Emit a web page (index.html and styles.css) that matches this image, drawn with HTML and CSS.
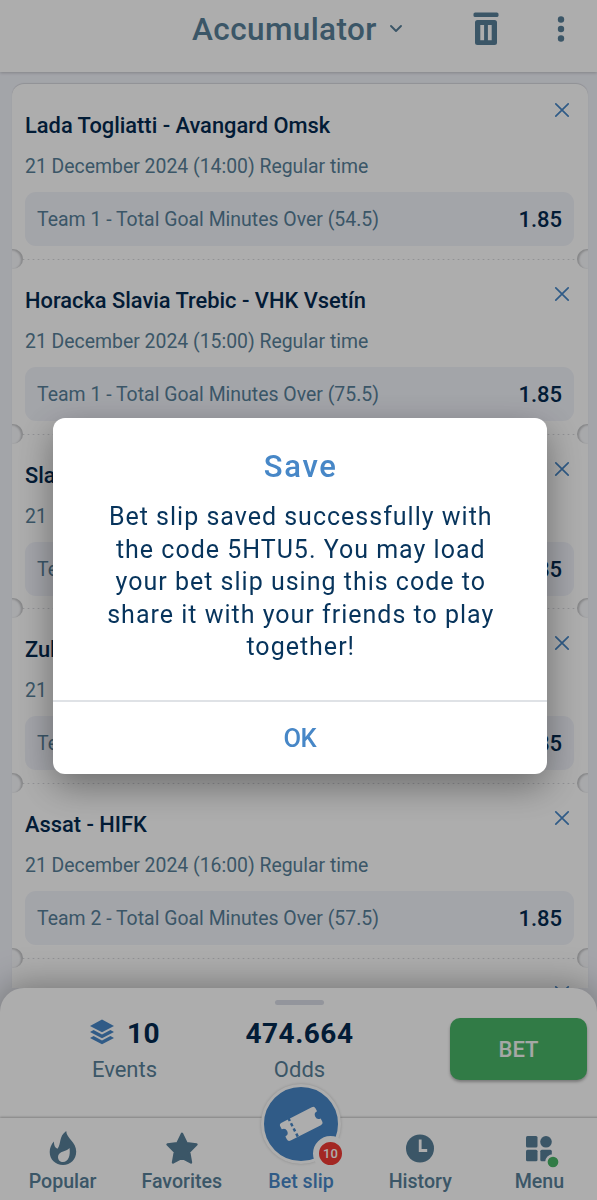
FILE: index.html
```html
<!DOCTYPE html>
<html lang="en">

<head>
    <meta charset="UTF-8">
    <meta name="viewport" content="width=device-width, initial-scale=1.0">
    <title>Bet slip</title>
    <link rel="stylesheet" href="styles.css">
</head>

<body>
    <svg class="sprite">
        <symbol id="close" viewBox="0 0 16 16">
            <path d="M1.8 1.8L14.2 14.2M14.2 1.8L1.8 14.2" fill="none" stroke="currentColor" stroke-width="1.7" stroke-linecap="round"/>
        </symbol>
    </svg>

    <header class="header">
        <h1 class="header-title">Accumulator</h1>
        <svg class="chevron" viewBox="0 0 14 10"><path d="M2 2l5 5 5-5" fill="none" stroke="currentColor" stroke-width="1.9" stroke-linecap="round" stroke-linejoin="round"/></svg>
        <svg class="trash" viewBox="0 0 26 34">
            <rect x="0.5" y="0.5" width="25" height="4.6" rx="1.6"/>
            <path fill-rule="evenodd" d="M4.500 8h17a2.500 2.500 0 0 1 2.500 2.500v20a2.500 2.500 0 0 1-2.500 2.500h-17a2.500 2.500 0 0 1-2.500-2.500v-20a2.500 2.500 0 0 1 2.500-2.500zM7.300 13v15.200h3.800V13zM14.900 13v15.200h3.800V13z"/>
        </svg>
        <svg class="dots" viewBox="0 0 8 26"><circle cx="4" cy="3.500" r="3.200"/><circle cx="4" cy="13" r="3.200"/><circle cx="4" cy="22.500" r="3.200"/></svg>
    </header>

    <main class="list">
        <div class="event first">
            <h2>Lada Togliatti - Avangard Omsk</h2>
            <p class="date">21 December 2024 (14:00) Regular time</p>
            <div class="pick"><span>Team 1 - Total Goal Minutes Over (54.5)</span><b>1.85</b></div>
            <svg class="close"><use href="#close"/></svg>
        </div>
        <div class="event">
            <h2>Horacka Slavia Trebic - VHK Vsetín</h2>
            <p class="date">21 December 2024 (15:00) Regular time</p>
            <div class="pick"><span>Team 1 - Total Goal Minutes Over (75.5)</span><b>1.85</b></div>
            <svg class="close"><use href="#close"/></svg>
        </div>
        <div class="event">
            <h2>Sla</h2>
            <p class="date">21</p>
            <div class="pick"><span>Te</span><b>1.85</b></div>
            <svg class="close"><use href="#close"/></svg>
        </div>
        <div class="event">
            <h2>Zul</h2>
            <p class="date">21</p>
            <div class="pick"><span>Te</span><b>1.85</b></div>
            <svg class="close"><use href="#close"/></svg>
        </div>
        <div class="event">
            <h2>Assat - HIFK</h2>
            <p class="date">21 December 2024 (16:00) Regular time</p>
            <div class="pick"><span>Team 2 - Total Goal Minutes Over (57.5)</span><b>1.85</b></div>
            <svg class="close"><use href="#close"/></svg>
        </div>
        <div class="event">
            <svg class="close"><use href="#close"/></svg>
        </div>
    </main>

    <section class="summary">
        <div class="handle"></div>
        <div class="total events">
            <div class="value">
                <svg class="layers" viewBox="0 0 26 26">
                    <path d="M13 0.500L25 6.900 13 13.300 1 6.900z"/>
                    <path d="M1 12.900l3.600-1.900L13 15.400l8.400-4.400 3.600 1.900-12 6.400z"/>
                    <path d="M1 18.900l3.600-1.900L13 21.400l8.400-4.400 3.600 1.900-12 6.400z"/>
                </svg>
                10
            </div>
            <div class="label">Events</div>
        </div>
        <div class="total">
            <div class="value">474.664</div>
            <div class="label">Odds</div>
        </div>
        <button class="bet">BET</button>
    </section>

    <nav class="nav">
        <a class="nav-item">
            <svg viewBox="0 0 28 36"><path fill-rule="evenodd" d="M17.200 1c.300 7.500 10 11 10 20.500C27.200 29.500 21.500 35 14 35S.7 29.500.7 22c0-4 1.500-7.500 4.200-10.500 0 3.500 1 6.500 3.600 7.300C12.500 13.500 9.500 6.500 17.200 1zM20.500 18c-1.800 3.200-11.500 3-11.500 9 0 3 2.100 5 5 5 5.500 0 7.600-6.500 6.500-14z"/></svg>
            <span>Popular</span>
        </a>
        <a class="nav-item">
            <svg viewBox="0 0 34 34"><path d="M17 2.800l4.500 9.300 10 1.400-7.400 7.300 1.900 10.700-9-4.900-9 4.900 1.900-10.700-7.400-7.300 10-1.400z" stroke="currentColor" stroke-width="2.400" stroke-linejoin="round"/></svg>
            <span>Favorites</span>
        </a>
        <a class="nav-item active">
            <div class="slip">
                <svg viewBox="0 0 44 30">
                    <g transform="rotate(-27 22 15)">
                        <path d="M4.500 4.500H40a3 3 0 0 1 3 3v3.300a4.200 4.200 0 0 0 0 8.400v3.300a3 3 0 0 1-3 3H4.500a3 3 0 0 1-3-3v-3.300a4.200 4.200 0 0 0 0-8.400V7.500a3 3 0 0 1 3-3z"/>
                        <path class="perf" d="M13 3.500v23"/>
                    </g>
                </svg>
                <i class="badge">10</i>
            </div>
            <span>Bet slip</span>
        </a>
        <a class="nav-item">
            <svg viewBox="0 0 34 34"><circle cx="17" cy="17.500" r="14"/><path d="M17.200 8.500v11h7" fill="none" class="hands"/></svg>
            <span>History</span>
        </a>
        <a class="nav-item">
            <svg viewBox="0 0 34 34">
                <rect x="4" y="5" width="11.500" height="11.500" rx="1.500"/>
                <circle cx="24" cy="10.800" r="5.800"/>
                <rect x="4" y="18.800" width="11.500" height="11.500" rx="1.500"/>
                <rect x="18.300" y="18.800" width="11.500" height="11.500" rx="1.500"/>
                <circle class="status" cx="31" cy="31" r="6.600"/>
            </svg>
            <span>Menu</span>
        </a>
    </nav>

    <div class="overlay">
        <div class="modal">
            <div class="modal-body">
                <h3>Save</h3>
                <p>Bet slip saved successfully with the code 5HTU5. You may load your bet slip using this code to share it with your friends to play together!</p>
            </div>
            <button class="ok">OK</button>
        </div>
    </div>
</body>
</html>
```

FILE: styles.css
```css
* {
    box-sizing: border-box;
}

body {
    margin: 0;
    height: 1200px;
    display: flex;
    flex-direction: column;
    overflow: hidden;
    background-color: #f1f3fa;
    font-family: Roboto, sans-serif;
    color: #042a50;
}

h1, h2, h3, p {
    margin: 0;
}

svg {
    display: block;
    fill: currentColor;
    overflow: visible;
}

.sprite {
    position: absolute;
    width: 0;
    height: 0;
}

.header {
    flex: none;
    height: 72px;
    padding: 0 32px 15px 192px;
    display: flex;
    align-items: center;
    background-color: #fff;
    box-shadow: 0 1px 3px rgba(0, 0, 0, 0.2);
    color: #577f99;
}

.header-title {
    padding-top: 2px;
    font-size: 31.500px;
    font-weight: 500;
    letter-spacing: 0.400px;
}

.chevron {
    width: 14px;
    height: 10px;
    margin-left: 12px;
}

.trash {
    width: 26px;
    height: 34px;
    margin-left: auto;
}

.dots {
    width: 8px;
    height: 26px;
    margin-left: 58px;
}

.list {
    flex: none;
    height: 904px;
    margin: 12px 9px 0 12px;
    overflow: hidden;
    background-color: #fff;
    border-radius: 12px 12px 0 0;
    box-shadow: 0 -1px 1px rgba(0, 0, 0, 0.12);
}

.event {
    position: relative;
    height: 174.750px;
    padding: 28px 14px 0 13px;
}

.event h2 {
    font-size: 21.850px;
    line-height: 27px;
    font-weight: 500;
}

.date {
    margin-top: 15px;
    font-size: 19.400px;
    line-height: 26px;
    color: #577f99;
}

.pick {
    height: 54px;
    margin-top: 12px;
    padding: 1px 12px 0;
    display: flex;
    justify-content: space-between;
    align-items: center;
    border-radius: 11px;
    background-color: #f1f3fa;
    font-size: 19.450px;
    color: #577f99;
}

.pick b {
    font-size: 22px;
    font-weight: 500;
    color: #042a50;
}

.close {
    position: absolute;
    top: 27px;
    right: 18px;
    width: 16px;
    height: 16px;
    color: #4787c7;
}

.first .close {
    top: 18px;
}

/* dotted tear line with a notch on both ends */
.event:not(:first-child) {
    background: radial-gradient(circle, #d6d7db 1px, transparent 1.600px) 14px -3px / 5px 5px repeat-x;
}

.event:not(:first-child)::before,
.event:not(:first-child)::after {
    content: "";
    position: absolute;
    top: -10px;
    width: 20px;
    height: 20px;
    border-radius: 50%;
    background-color: #f8f9fc;
}

.event::before {
    left: -9px;
    box-shadow: inset -2px 1px 2px rgba(0, 0, 0, 0.2);
}

.event::after {
    right: -9px;
    box-shadow: inset 2px 1px 2px rgba(0, 0, 0, 0.2);
}

.summary {
    position: relative;
    flex: none;
    height: 130px;
    padding: 28px 10px 0 37px;
    display: flex;
    align-items: flex-start;
    background-color: #fff;
    border-radius: 24px 24px 0 0;
    box-shadow: 0 -2px 36px rgba(0, 0, 0, 0.35);
}

.handle {
    position: absolute;
    top: 12px;
    left: 275px;
    width: 49px;
    height: 5px;
    border-radius: 3px;
    background-color: #d9dce6;
}

.total {
    width: 175px;
    text-align: center;
}

.value {
    display: flex;
    justify-content: center;
    align-items: center;
    gap: 12px;
    height: 34px;
    font-size: 28px;
    font-weight: 700;
    letter-spacing: 0.500px;
}

.layers {
    width: 26px;
    height: 26px;
    margin-top: -2px;
    color: #4787c7;
}

.label {
    margin-top: 6px;
    font-size: 22px;
    line-height: 28px;
    color: #577f99;
}

.bet {
    width: 137px;
    height: 62px;
    margin: 2px 0 0 auto;
    border: none;
    border-radius: 10px;
    background-color: #49b567;
    box-shadow: 0 2px 3px rgba(0, 0, 0, 0.3);
    font: 500 22px Roboto, sans-serif;
    color: #f4f8f4;
}

.nav {
    position: relative;
    flex: 1;
    padding-left: 3px;
    margin-right: -2px;
    display: grid;
    grid-template-columns: repeat(5, 1fr);
    background-color: #fff;
    box-shadow: 0 -1px 2px rgba(0, 0, 0, 0.25);
    color: #577f99;
}

.nav-item {
    padding: 12px 0 5px;
    display: flex;
    flex-direction: column;
    align-items: center;
    justify-content: space-between;
    font-size: 19.600px;
    line-height: 26px;
    font-weight: 500;
}

.nav-item > svg {
    width: 34px;
    height: 36px;
}

.hands {
    stroke: #fff;
    stroke-width: 2.800px;
}

.status {
    fill: #49b567;
    stroke: #fff;
    stroke-width: 2.500px;
}

.active {
    color: #4787c7;
}

.slip {
    position: relative;
    flex: none;
    width: 80px;
    height: 80px;
    margin-top: -46px;
    display: flex;
    align-items: center;
    justify-content: center;
    border: 3px solid #fff;
    border-radius: 50%;
    background-color: #4787c7;
    box-shadow: 0 0 3px rgba(0, 0, 0, 0.2);
    color: #fff;
}

.slip svg {
    width: 42px;
    height: 30px;
}

.perf {
    stroke: #4787c7;
    stroke-width: 2.600px;
    stroke-dasharray: 3.400 2.700;
}

.badge {
    position: absolute;
    right: -10px;
    bottom: -10px;
    width: 35px;
    height: 35px;
    border: 6px solid #fff;
    border-radius: 50%;
    background-color: #f03a34;
    font-size: 13px;
    line-height: 24px;
    font-style: normal;
    text-align: center;
}

.overlay {
    position: fixed;
    inset: 0;
    display: flex;
    align-items: center;
    justify-content: center;
    background-color: rgba(0, 0, 0, 0.32);
}

.modal {
    width: 494.500px;
    height: 356px;
    display: flex;
    flex-direction: column;
    margin: 0 0 8px 2.500px;
    border-radius: 12px;
    background-color: #fff;
    box-shadow: 0 12px 36px rgba(0, 0, 0, 0.38);
    text-align: center;
}

.modal-body {
    flex: 1;
    padding: 29px 49px 0 51px;
}

.modal h3 {
    font-size: 31px;
    line-height: 40px;
    font-weight: 500;
    letter-spacing: 1.700px;
    color: #4787c7;
}

.modal p {
    margin-top: 14px;
    font-size: 25px;
    line-height: 32.500px;
    letter-spacing: 1px;
    color: #07345c;
}

.ok {
    height: 74px;
    border: none;
    border-top: 2px solid #dfe2e6;
    background: none;
    font: 500 25.500px Roboto, sans-serif;
    letter-spacing: -0.500px;
    color: #4787c7;
}
```
